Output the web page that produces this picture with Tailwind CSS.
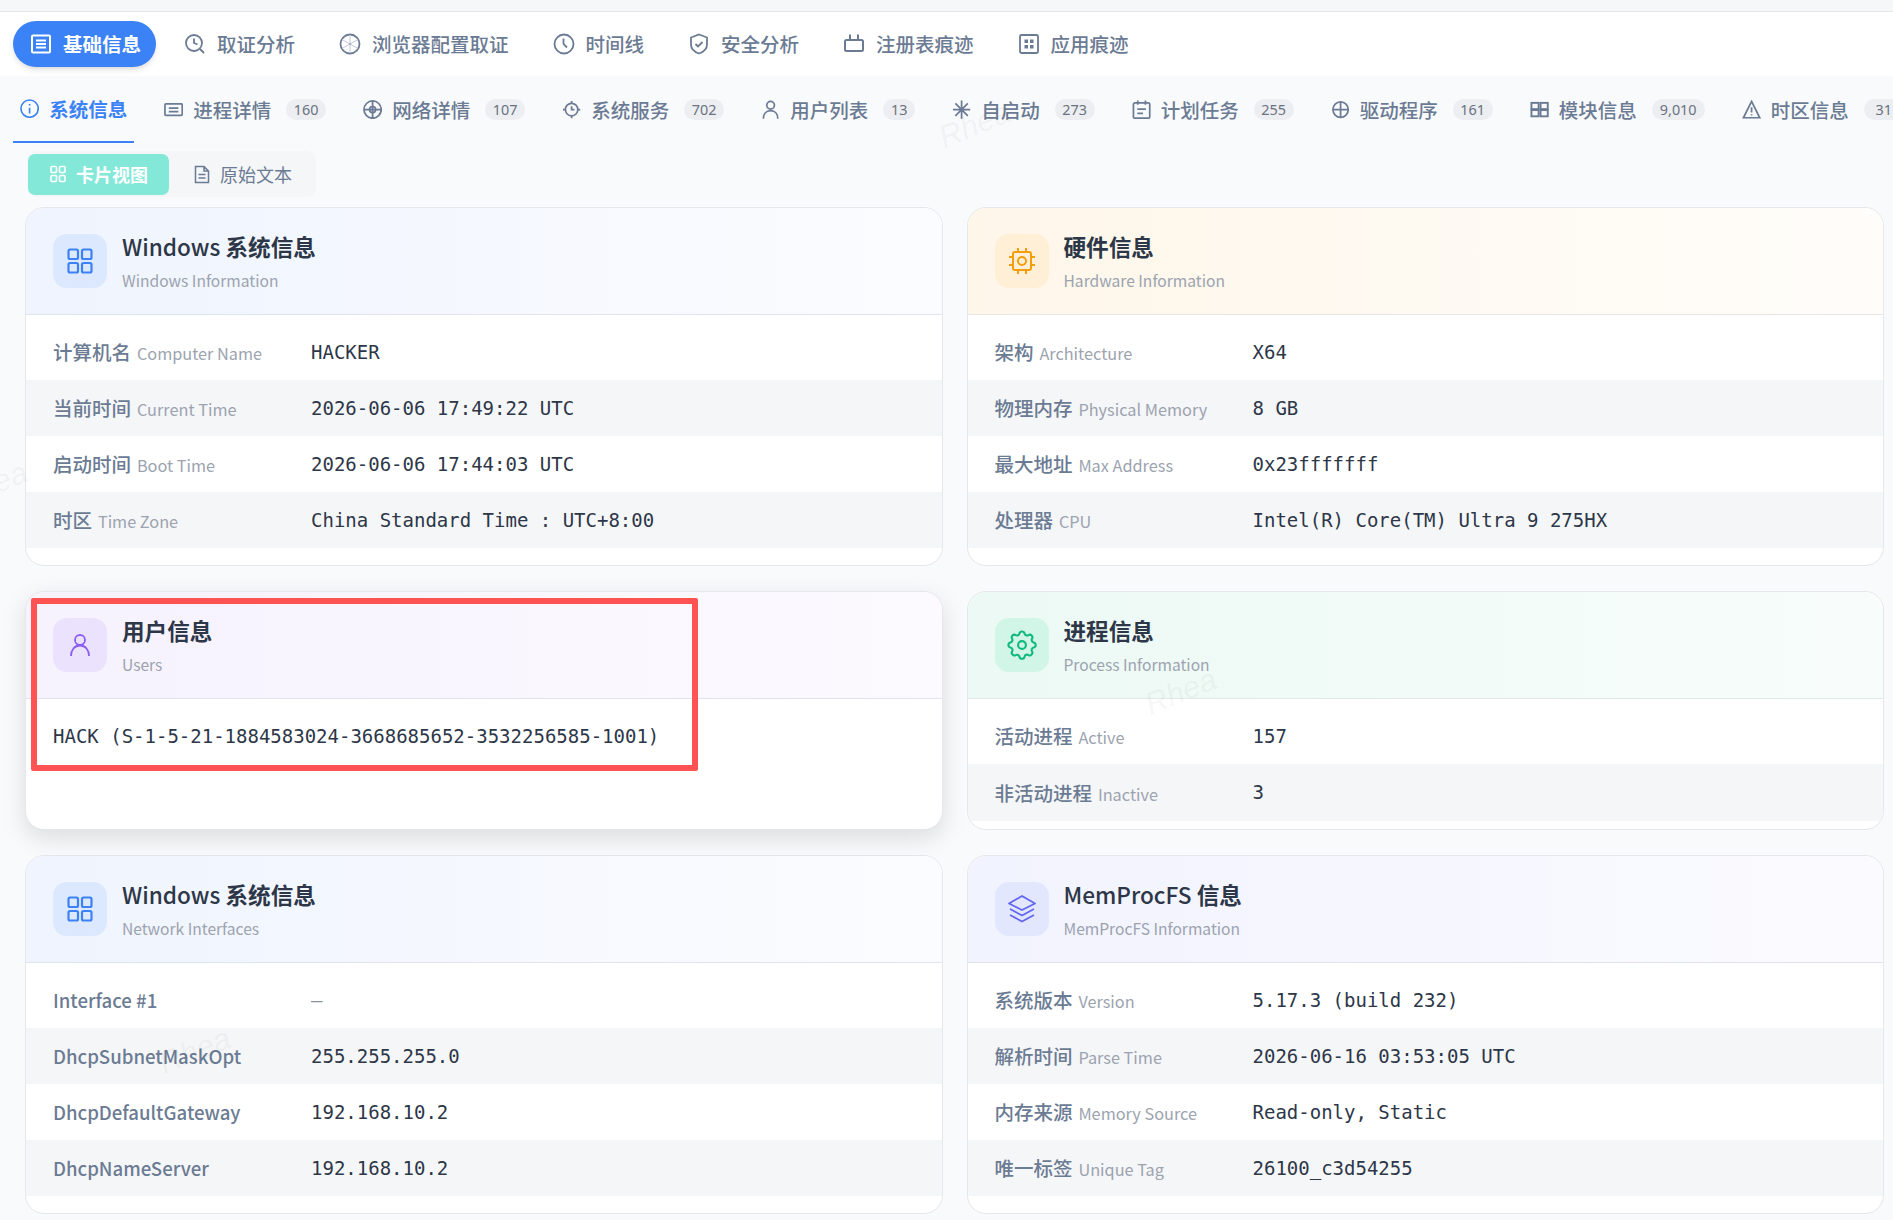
<!DOCTYPE html>
<html lang="zh-CN">
<head>
    <meta charset="UTF-8">
    <title>基础信息</title>
    <script src="https://cdn.jsdelivr.net/npm/@tailwindcss/browser@4"></script>
</head>
<body class="bg-[#f9fafc] font-['Noto_Sans_CJK_SC','Noto_Sans',sans-serif] text-[#6b7b93]">
<div class="relative h-[1220px] overflow-hidden">
    <!-- Top strip -->
    <div class="h-[12px] bg-[#f6f7f9] border-b border-[#e6e7ea]"></div>

    <!-- Main tabs -->
    <nav class="h-[64px] bg-white flex items-center pl-[13px] gap-[12px] text-[19.5px] font-medium whitespace-nowrap">
        <a class="h-[46px] flex items-center gap-[11px] pl-[17px] pr-[15px] rounded-[23px] bg-[#3b82f6] text-white font-bold shadow-md">
            <svg class="w-[22px] h-[22px]" viewBox="0 0 22 22" fill="none" stroke="currentColor" stroke-width="2"><rect x="2" y="2.5" width="18" height="17" rx="1"/><path d="M6 7.5h10M6 11h10M6 14.5h10"/></svg>
            基础信息
        </a>
        <a class="flex items-center gap-[11px] px-[16px]">
            <svg class="w-[22px] h-[22px]" viewBox="0 0 22 22" fill="none" stroke="currentColor" stroke-width="1.8"><circle cx="10" cy="10" r="8"/><path d="M10 5.5V10l3.5 1.5M16 16l4 4"/></svg>
            取证分析
        </a>
        <a class="flex items-center gap-[11px] px-[16px]">
            <svg class="w-[22px] h-[22px]" viewBox="0 0 22 22" fill="none" stroke="currentColor" stroke-width="1.8"><circle cx="11" cy="11" r="9.5"/><path d="M11 2v18M3 6.5l16 9M19 6.5l-16 9" stroke-width="1" stroke="#c5ccd8"/><circle cx="11" cy="11" r="1" fill="#9aa6b8" stroke="none"/></svg>
            浏览器配置取证
        </a>
        <a class="flex items-center gap-[11px] px-[16px]">
            <svg class="w-[22px] h-[22px]" viewBox="0 0 22 22" fill="none" stroke="currentColor" stroke-width="1.8"><circle cx="11" cy="11" r="9.5"/><path d="M10.5 5.5V11l3.5 3.5"/></svg>
            时间线
        </a>
        <a class="flex items-center gap-[11px] px-[16px]">
            <svg class="w-[22px] h-[22px]" viewBox="0 0 22 22" fill="none" stroke="currentColor" stroke-width="1.8"><path d="M11 1.500l8 3v7c0 4.500-3.500 7.500-8 9-4.500-1.500-8-4.500-8-9v-7z"/><path d="M7.500 11l2.500 2.500 4.500-4.500"/></svg>
            安全分析
        </a>
        <a class="flex items-center gap-[11px] px-[16px]">
            <svg class="w-[22px] h-[22px]" viewBox="0 0 22 22" fill="none" stroke="currentColor" stroke-width="2"><rect x="2" y="7" width="18" height="11" rx="1.500"/><path d="M7 1.500V7M15 1.500V7"/></svg>
            注册表痕迹
        </a>
        <a class="flex items-center gap-[11px] px-[16px]">
            <svg class="w-[22px] h-[22px]" viewBox="0 0 22 22" fill="none" stroke="currentColor" stroke-width="1.800"><rect x="2" y="2" width="18" height="18" rx="1.500"/><path d="M6.500 6.500h3.500v3.500H6.500zM12 6.500h3.500v3.500H12zM6.500 12h3.500v3.500H6.500zM12 12h3.500v3.500H12z" fill="currentColor" stroke="none"/></svg>
            应用痕迹
        </a>
    </nav>

    <!-- Sub tabs -->
    <div class="flex pl-[13px] gap-[22.8px] text-[19.5px] font-medium whitespace-nowrap">
        <a class="h-[67px] flex items-center gap-[10px] px-[7px] border-b-2 border-[#3b82f6] text-[#3b82f6] font-bold">
            <svg class="w-[19.2px] h-[19.2px]" viewBox="0 0 20 20" fill="none" stroke="currentColor" stroke-width="1.700"><circle cx="10" cy="10" r="9"/><path d="M10 9v6M10 5.200v1.600"/></svg>
            系统信息
        </a>
        <a class="h-[67px] flex items-center gap-[10px] px-[7px]">
            <svg class="w-[19.2px] h-[19.2px]" viewBox="0 0 20 20" fill="none" stroke="currentColor" stroke-width="1.800"><rect x="1" y="4" width="18" height="12" rx="1"/><path d="M5 8.500h10M5 12h10"/></svg>
            进程详情
            <span class="ml-[5px] w-[40px] h-[21px] rounded-full bg-[#eceef1] font-['Noto_Sans',sans-serif] text-[14.4px] font-normal text-[#6b7280] flex items-center justify-center">160</span>
        </a>
        <a class="h-[67px] flex items-center gap-[10px] px-[7px]">
            <svg class="w-[19.2px] h-[19.2px]" viewBox="0 0 20 20" fill="none" stroke="currentColor" stroke-width="1.800"><circle cx="10" cy="10" r="9"/><circle cx="10" cy="10" r="3.200"/><path d="M10 1v18M1 10h18"/></svg>
            网络详情
            <span class="ml-[5px] w-[40px] h-[21px] rounded-full bg-[#eceef1] font-['Noto_Sans',sans-serif] text-[14.4px] font-normal text-[#6b7280] flex items-center justify-center">107</span>
        </a>
        <a class="h-[67px] flex items-center gap-[10px] px-[7px]">
            <svg class="w-[19.2px] h-[19.2px]" viewBox="0 0 20 20" fill="none" stroke="currentColor" stroke-width="1.800"><circle cx="10" cy="10" r="6.500"/><path d="M10 1v2.500M10 16.500V19M1 10h2.500M16.500 10H19M10 6.500V10h3"/></svg>
            系统服务
            <span class="ml-[5px] w-[40px] h-[21px] rounded-full bg-[#eceef1] font-['Noto_Sans',sans-serif] text-[14.4px] font-normal text-[#6b7280] flex items-center justify-center">702</span>
        </a>
        <a class="h-[67px] flex items-center gap-[10px] px-[7px]">
            <svg class="w-[19.2px] h-[19.2px]" viewBox="0 0 20 20" fill="none" stroke="currentColor" stroke-width="1.800"><circle cx="10" cy="5.500" r="4"/><path d="M2.500 19.500c0-5 3-8.500 7.500-8.500s7.500 3.500 7.500 8.500"/></svg>
            用户列表
            <span class="ml-[5px] w-[32px] h-[21px] rounded-full bg-[#eceef1] font-['Noto_Sans',sans-serif] text-[14.4px] font-normal text-[#6b7280] flex items-center justify-center">13</span>
        </a>
        <a class="h-[67px] flex items-center gap-[10px] px-[7px]">
            <svg class="w-[19.2px] h-[19.2px]" viewBox="0 0 20 20" fill="none" stroke="currentColor" stroke-width="1.800"><path d="M10 .5v19M1 10h18M3.500 3.500l13 13M16.500 3.500l-13 13"/></svg>
            自启动
            <span class="ml-[5px] w-[40px] h-[21px] rounded-full bg-[#eceef1] font-['Noto_Sans',sans-serif] text-[14.4px] font-normal text-[#6b7280] flex items-center justify-center">273</span>
        </a>
        <a class="h-[67px] flex items-center gap-[10px] px-[7px]">
            <svg class="w-[19.2px] h-[19.2px]" viewBox="0 0 20 20" fill="none" stroke="currentColor" stroke-width="1.800"><rect x="1.500" y="3" width="17" height="16" rx="1.500"/><path d="M6 .5V5M14 .5V5M5.500 9.500h9M5.500 14h6"/></svg>
            计划任务
            <span class="ml-[5px] w-[40px] h-[21px] rounded-full bg-[#eceef1] font-['Noto_Sans',sans-serif] text-[14.4px] font-normal text-[#6b7280] flex items-center justify-center">255</span>
        </a>
        <a class="h-[67px] flex items-center gap-[10px] px-[7px]">
            <svg class="w-[19.2px] h-[19.2px]" viewBox="0 0 20 20" fill="none" stroke="currentColor" stroke-width="1.800"><circle cx="10" cy="10" r="8"/><path d="M10 2v16M2 10h16"/></svg>
            驱动程序
            <span class="ml-[5px] w-[40px] h-[21px] rounded-full bg-[#eceef1] font-['Noto_Sans',sans-serif] text-[14.4px] font-normal text-[#6b7280] flex items-center justify-center">161</span>
        </a>
        <a class="h-[67px] flex items-center gap-[10px] px-[7px]">
            <svg class="w-[19.2px] h-[19.2px]" viewBox="0 0 20 20" fill="none" stroke="currentColor" stroke-width="2"><rect x="1.500" y="3" width="7.500" height="6.500"/><rect x="11" y="3" width="7.500" height="6.500"/><rect x="1.500" y="10.500" width="7.500" height="6.500"/><rect x="11" y="10.500" width="7.500" height="6.500"/></svg>
            模块信息
            <span class="ml-[5px] w-[53px] h-[21px] rounded-full bg-[#eceef1] font-['Noto_Sans',sans-serif] text-[14.4px] font-normal text-[#6b7280] flex items-center justify-center">9,010</span>
        </a>
        <a class="h-[67px] flex items-center gap-[10px] px-[7px]">
            <svg class="w-[19.2px] h-[19.2px]" viewBox="0 0 20 20" fill="none" stroke="currentColor" stroke-width="1.800"><path d="M10 1.500L18.500 18.500h-17zM10 7.500v5.500M10 14.800v1.400"/></svg>
            时区信息
            <span class="ml-[5px] w-[40px] h-[21px] rounded-full bg-[#eceef1] font-['Noto_Sans',sans-serif] text-[14.4px] font-normal text-[#6b7280] flex items-center justify-center">31</span>
        </a>
    </div>

    <!-- View toggle -->
    <div class="ml-[27px] mt-[8px] w-[289px] h-[46px] rounded-[9px] bg-[#f5f6f8] flex items-center pl-px text-[18px] whitespace-nowrap">
        <button class="w-[141px] h-[41px] rounded-[7px] bg-[#84e8d8] text-white font-bold flex items-center gap-[10px] pl-[22px]">
            <svg class="w-[16px] h-[18px]" viewBox="0 0 16 18" fill="none" stroke="currentColor" stroke-width="1.600"><rect x="1" y="1.500" width="5.500" height="6" rx="1"/><rect x="9.500" y="1.500" width="5.500" height="6" rx="1"/><rect x="1" y="10.500" width="5.500" height="6" rx="1"/><rect x="9.500" y="10.500" width="5.500" height="6" rx="1"/></svg>
            卡片视图
        </button>
        <button class="flex items-center gap-[10px] pl-[25px]">
            <svg class="w-[16px] h-[19px]" viewBox="0 0 16 19" fill="none" stroke="currentColor" stroke-width="1.500"><path d="M1.500 1.500h8.500l4.500 4.500v11.500h-13zM10 1.500V6h4.500M4.500 9.500h7M4.500 13h7"/></svg>
            原始文本
        </button>
    </div>

    <!-- Cards -->
    <div class="grid grid-cols-2 gap-x-[24px] gap-y-[25px] pl-[25px] pr-[9px] mt-[10px]">
        <section class="bg-white border border-[#e5e7eb] rounded-[19px] overflow-hidden">
            <header class="h-[107px] border-b border-[#dfe4ee] bg-gradient-to-r from-[#eff4fe] to-[#fbfcff] flex items-center pl-[27px] gap-[15px]">
                <div class="w-[54px] h-[54px] rounded-[14px] bg-[#dbe8fe] flex items-center justify-center text-[#3b82f6]">
                    <svg class="w-[26px] h-[26px]" viewBox="0 0 26 26" fill="none" stroke="currentColor" stroke-width="2.200"><rect x="1.500" y="1.500" width="9.500" height="9.500" rx="1.500"/><rect x="15" y="1.500" width="9.500" height="9.500" rx="1.500"/><rect x="1.500" y="15" width="9.500" height="9.500" rx="1.500"/><rect x="15" y="15" width="9.500" height="9.500" rx="1.500"/></svg>
                </div>
                <div>
                    <h3 class="text-[22.6px] leading-[30px] font-semibold text-[#2d3748]"><span class="font-medium">Windows</span> 系统信息</h3>
                    <p class="mt-[7px] text-[15.6px] leading-[22px] text-[#9ca3af]">Windows Information</p>
                </div>
            </header>
            <div class="pt-[9px] pb-[17px]">
                <div class="h-14 flex items-center pl-[27px]">
                    <div class="w-[258px] shrink-0 text-[19.5px] font-medium">计算机名 <span class="ml-[1.5px] text-[16.3px] font-normal text-[#9ca3af]">Computer Name</span></div>
                    <div class="font-['DejaVu_Sans_Mono',monospace] text-[19px] text-[#2d3748]">HACKER</div>
                </div>
                <div class="h-14 flex items-center pl-[27px] bg-[#f5f6f8]">
                    <div class="w-[258px] shrink-0 text-[19.5px] font-medium">当前时间 <span class="ml-[1.5px] text-[16.3px] font-normal text-[#9ca3af]">Current Time</span></div>
                    <div class="font-['DejaVu_Sans_Mono',monospace] text-[19px] text-[#2d3748]">2026-06-06 17:49:22 UTC</div>
                </div>
                <div class="h-14 flex items-center pl-[27px]">
                    <div class="w-[258px] shrink-0 text-[19.5px] font-medium">启动时间 <span class="ml-[1.5px] text-[16.3px] font-normal text-[#9ca3af]">Boot Time</span></div>
                    <div class="font-['DejaVu_Sans_Mono',monospace] text-[19px] text-[#2d3748]">2026-06-06 17:44:03 UTC</div>
                </div>
                <div class="h-14 flex items-center pl-[27px] bg-[#f5f6f8]">
                    <div class="w-[258px] shrink-0 text-[19.5px] font-medium">时区 <span class="ml-[1.5px] text-[16.3px] font-normal text-[#9ca3af]">Time Zone</span></div>
                    <div class="font-['DejaVu_Sans_Mono',monospace] text-[19px] text-[#2d3748]">China Standard Time : UTC+8:00</div>
                </div>
            </div>
        </section>

        <section class="bg-white border border-[#e5e7eb] rounded-[19px] overflow-hidden">
            <header class="h-[107px] border-b border-[#e8e6e2] bg-gradient-to-r from-[#fef6e9] to-[#fffdfa] flex items-center pl-[27px] gap-[15px]">
                <div class="w-[54px] h-[54px] rounded-[14px] bg-[#feefd6] flex items-center justify-center text-[#f59e0b]">
                    <svg class="w-[28px] h-[28px]" viewBox="0 0 28 28" fill="none" stroke="currentColor" stroke-width="2"><rect x="5" y="5" width="18" height="18" rx="2"/><circle cx="14" cy="14" r="4"/><path d="M10 1v4M18 1v4M10 23v4M18 23v4M1 10h4M1 18h4M23 10h4M23 18h4"/></svg>
                </div>
                <div>
                    <h3 class="text-[22.6px] leading-[30px] font-semibold text-[#2d3748]">硬件信息</h3>
                    <p class="mt-[7px] text-[15.6px] leading-[22px] text-[#9ca3af]">Hardware Information</p>
                </div>
            </header>
            <div class="pt-[9px] pb-[17px]">
                <div class="h-14 flex items-center pl-[27px]">
                    <div class="w-[258px] shrink-0 text-[19.5px] font-medium">架构 <span class="ml-[1.5px] text-[16.3px] font-normal text-[#9ca3af]">Architecture</span></div>
                    <div class="font-['DejaVu_Sans_Mono',monospace] text-[19px] text-[#2d3748]">X64</div>
                </div>
                <div class="h-14 flex items-center pl-[27px] bg-[#f5f6f8]">
                    <div class="w-[258px] shrink-0 text-[19.5px] font-medium">物理内存 <span class="ml-[1.5px] text-[16.3px] font-normal text-[#9ca3af]">Physical Memory</span></div>
                    <div class="font-['DejaVu_Sans_Mono',monospace] text-[19px] text-[#2d3748]">8 GB</div>
                </div>
                <div class="h-14 flex items-center pl-[27px]">
                    <div class="w-[258px] shrink-0 text-[19.5px] font-medium">最大地址 <span class="ml-[1.5px] text-[16.3px] font-normal text-[#9ca3af]">Max Address</span></div>
                    <div class="font-['DejaVu_Sans_Mono',monospace] text-[19px] text-[#2d3748]">0x23fffffff</div>
                </div>
                <div class="h-14 flex items-center pl-[27px] bg-[#f5f6f8]">
                    <div class="w-[258px] shrink-0 text-[19.5px] font-medium">处理器 <span class="ml-[1.5px] text-[16.3px] font-normal text-[#9ca3af]">CPU</span></div>
                    <div class="font-['DejaVu_Sans_Mono',monospace] text-[19px] text-[#2d3748]">Intel(R) Core(TM) Ultra 9 275HX</div>
                </div>
            </div>
        </section>

        <section class="bg-white border border-[#e5e7eb] rounded-[19px] overflow-hidden shadow-[0_8px_24px_rgba(0,0,0,0.12)]">
            <header class="h-[107px] border-b border-[#e4e2ee] bg-gradient-to-r from-[#f6f2fe] to-[#fcfaff] flex items-center pl-[27px] gap-[15px]">
                <div class="w-[54px] h-[54px] rounded-[14px] bg-[#ebe3fe] flex items-center justify-center text-[#8b5cf6]">
                    <svg class="w-[22px] h-[24px]" viewBox="0 0 22 24" fill="none" stroke="currentColor" stroke-width="1.800"><circle cx="11" cy="7" r="5"/><path d="M2 23c0-6 3.500-10.500 9-10.500S20 17 20 23"/></svg>
                </div>
                <div>
                    <h3 class="text-[22.6px] leading-[30px] font-semibold text-[#2d3748]">用户信息</h3>
                    <p class="mt-[7px] text-[15.6px] leading-[22px] text-[#9ca3af]">Users</p>
                </div>
            </header>
            <div class="pt-[9px] pl-[27px]">
                <div class="h-14 flex items-center font-['DejaVu_Sans_Mono',monospace] text-[19px] text-[#2d3748]">HACK (S-1-5-21-1884583024-3668685652-3532256585-1001)</div>
            </div>
        </section>

        <section class="bg-white border border-[#e5e7eb] rounded-[19px] overflow-hidden">
            <header class="h-[107px] border-b border-[#dfe9e6] bg-gradient-to-r from-[#ecf9f4] to-[#f8fdfb] flex items-center pl-[27px] gap-[15px]">
                <div class="w-[54px] h-[54px] rounded-[14px] bg-[#d1f5e6] flex items-center justify-center text-[#10b981]">
                    <svg class="w-[30px] h-[30px]" viewBox="2 2 20 20" fill="none" stroke="currentColor" stroke-width="1.400" stroke-linejoin="round"><path d="M10.300 4.300c.4-1.800 3-1.800 3.400 0a1.700 1.700 0 0 0 2.600 1.100c1.500-.9 3.300.8 2.400 2.400a1.700 1.700 0 0 0 1.100 2.500c1.800.4 1.800 3 0 3.400a1.700 1.700 0 0 0-1.100 2.600c.9 1.500-.9 3.300-2.400 2.400a1.700 1.700 0 0 0-2.600 1.100c-.4 1.800-3 1.800-3.400 0a1.700 1.700 0 0 0-2.500-1.100c-1.600.9-3.300-.9-2.400-2.400a1.700 1.700 0 0 0-1.100-2.600c-1.800-.4-1.800-3 0-3.400a1.700 1.700 0 0 0 1.100-2.500c-.9-1.600.8-3.300 2.400-2.400a1.700 1.700 0 0 0 2.500-1.100z"/><circle cx="12" cy="12" r="2.600"/></svg>
                </div>
                <div>
                    <h3 class="text-[22.6px] leading-[30px] font-semibold text-[#2d3748]">进程信息</h3>
                    <p class="mt-[7px] text-[15.6px] leading-[22px] text-[#9ca3af]">Process Information</p>
                </div>
            </header>
            <div class="pt-[9px] pb-[8px]">
                <div class="h-14 flex items-center pl-[27px]">
                    <div class="w-[258px] shrink-0 text-[19.5px] font-medium">活动进程 <span class="ml-[1.5px] text-[16.3px] font-normal text-[#9ca3af]">Active</span></div>
                    <div class="font-['DejaVu_Sans_Mono',monospace] text-[19px] text-[#2d3748]">157</div>
                </div>
                <div class="h-[57px] flex items-center pl-[27px] bg-[#f5f6f8]">
                    <div class="w-[258px] shrink-0 text-[19.5px] font-medium">非活动进程 <span class="ml-[1.5px] text-[16.3px] font-normal text-[#9ca3af]">Inactive</span></div>
                    <div class="font-['DejaVu_Sans_Mono',monospace] text-[19px] text-[#2d3748]">3</div>
                </div>
            </div>
        </section>

        <section class="bg-white border border-[#e5e7eb] rounded-[19px] overflow-hidden">
            <header class="h-[107px] border-b border-[#dfe4ee] bg-gradient-to-r from-[#eff4fe] to-[#fbfcff] flex items-center pl-[27px] gap-[15px]">
                <div class="w-[54px] h-[54px] rounded-[14px] bg-[#dbe8fe] flex items-center justify-center text-[#3b82f6]">
                    <svg class="w-[26px] h-[26px]" viewBox="0 0 26 26" fill="none" stroke="currentColor" stroke-width="2.200"><rect x="1.500" y="1.500" width="9.500" height="9.500" rx="1.500"/><rect x="15" y="1.500" width="9.500" height="9.500" rx="1.500"/><rect x="1.500" y="15" width="9.500" height="9.500" rx="1.500"/><rect x="15" y="15" width="9.500" height="9.500" rx="1.500"/></svg>
                </div>
                <div>
                    <h3 class="text-[22.6px] leading-[30px] font-semibold text-[#2d3748]"><span class="font-medium">Windows</span> 系统信息</h3>
                    <p class="mt-[7px] text-[15.6px] leading-[22px] text-[#9ca3af]">Network Interfaces</p>
                </div>
            </header>
            <div class="pt-[9px] pb-[17px]">
                <div class="h-14 flex items-center pl-[27px]">
                    <div class="w-[258px] shrink-0 text-[18.6px] font-medium">Interface #1</div>
                    <div class="font-['DejaVu_Sans_Mono',monospace] text-[19px] text-[#8b93a0]">—</div>
                </div>
                <div class="h-14 flex items-center pl-[27px] bg-[#f5f6f8]">
                    <div class="w-[258px] shrink-0 text-[18.6px] font-medium">DhcpSubnetMaskOpt</div>
                    <div class="font-['DejaVu_Sans_Mono',monospace] text-[19px] text-[#2d3748]">255.255.255.0</div>
                </div>
                <div class="h-14 flex items-center pl-[27px]">
                    <div class="w-[258px] shrink-0 text-[18.6px] font-medium">DhcpDefaultGateway</div>
                    <div class="font-['DejaVu_Sans_Mono',monospace] text-[19px] text-[#2d3748]">192.168.10.2</div>
                </div>
                <div class="h-14 flex items-center pl-[27px] bg-[#f5f6f8]">
                    <div class="w-[258px] shrink-0 text-[18.6px] font-medium">DhcpNameServer</div>
                    <div class="font-['DejaVu_Sans_Mono',monospace] text-[19px] text-[#2d3748]">192.168.10.2</div>
                </div>
            </div>
        </section>

        <section class="bg-white border border-[#e5e7eb] rounded-[19px] overflow-hidden">
            <header class="h-[107px] border-b border-[#e0e2ee] bg-gradient-to-r from-[#f1f3fe] to-[#fbfbff] flex items-center pl-[27px] gap-[15px]">
                <div class="w-[54px] h-[54px] rounded-[14px] bg-[#e2e7fd] flex items-center justify-center text-[#6366f1]">
                    <svg class="w-[30px] h-[30px]" viewBox="0 0 30 30" fill="none" stroke="currentColor" stroke-width="1.800" stroke-linejoin="round"><path d="M15 2l13 7.500L15 16 2 9.500z"/><path d="M3 15l12 6.500L27 15M3 21l12 6.500L27 21"/></svg>
                </div>
                <div>
                    <h3 class="text-[22.6px] leading-[30px] font-semibold text-[#2d3748]"><span class="font-medium">MemProcFS</span> 信息</h3>
                    <p class="mt-[7px] text-[15.6px] leading-[22px] text-[#9ca3af]">MemProcFS Information</p>
                </div>
            </header>
            <div class="pt-[9px] pb-[17px]">
                <div class="h-14 flex items-center pl-[27px]">
                    <div class="w-[258px] shrink-0 text-[19.5px] font-medium">系统版本 <span class="ml-[1.5px] text-[16.3px] font-normal text-[#9ca3af]">Version</span></div>
                    <div class="font-['DejaVu_Sans_Mono',monospace] text-[19px] text-[#2d3748]">5.17.3 (build 232)</div>
                </div>
                <div class="h-14 flex items-center pl-[27px] bg-[#f5f6f8]">
                    <div class="w-[258px] shrink-0 text-[19.5px] font-medium">解析时间 <span class="ml-[1.5px] text-[16.3px] font-normal text-[#9ca3af]">Parse Time</span></div>
                    <div class="font-['DejaVu_Sans_Mono',monospace] text-[19px] text-[#2d3748]">2026-06-16 03:53:05 UTC</div>
                </div>
                <div class="h-14 flex items-center pl-[27px]">
                    <div class="w-[258px] shrink-0 text-[19.5px] font-medium">内存来源 <span class="ml-[1.5px] text-[16.3px] font-normal text-[#9ca3af]">Memory Source</span></div>
                    <div class="font-['DejaVu_Sans_Mono',monospace] text-[19px] text-[#2d3748]">Read-only, Static</div>
                </div>
                <div class="h-14 flex items-center pl-[27px] bg-[#f5f6f8]">
                    <div class="w-[258px] shrink-0 text-[19.5px] font-medium">唯一标签 <span class="ml-[1.5px] text-[16.3px] font-normal text-[#9ca3af]">Unique Tag</span></div>
                    <div class="font-['DejaVu_Sans_Mono',monospace] text-[19px] text-[#2d3748]">26100_c3d54255</div>
                </div>
            </div>
        </section>
    </div>

    <!-- Watermarks -->
    <span class="absolute left-[938px] top-[102px] -rotate-[22deg] italic font-['Liberation_Sans',sans-serif] text-[31px] text-black/5 pointer-events-none">Rhea</span>
    <span class="absolute left-[1144px] top-[669px] -rotate-[22deg] italic font-['Liberation_Sans',sans-serif] text-[31px] text-black/5 pointer-events-none">Rhea</span>
    <span class="absolute left-[158px] top-[1028px] -rotate-[22deg] italic font-['Liberation_Sans',sans-serif] text-[31px] text-black/5 pointer-events-none">Rhea</span>
    <span class="absolute left-[-45px] top-[462px] -rotate-[22deg] italic font-['Liberation_Sans',sans-serif] text-[31px] text-black/5 pointer-events-none">Rhea</span>

    <!-- Red annotation box -->
    <div class="absolute left-[31px] top-[598px] w-[667px] h-[173px] border-[6px] border-[#ff5252] rounded-[2px] pointer-events-none"></div>
</div>
</body>
</html>
